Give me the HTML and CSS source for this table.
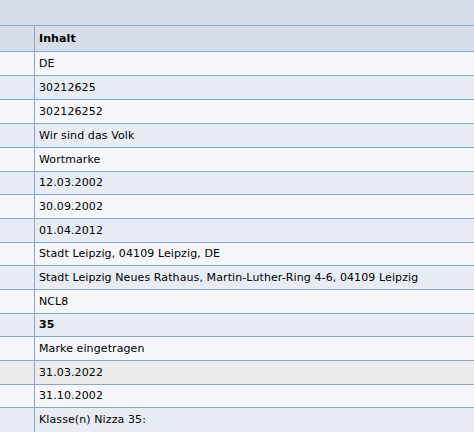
FILE: index.html
```html
<!DOCTYPE html>
<html lang="de">
<head>
  <meta charset="UTF-8" />
  <title>Registerauskunft</title>
  <link rel="stylesheet" href="styles.css">
</head>
<body>

  <div class="register">
    <div class="register-head"></div>

    <table class="register-table">
      <thead>
        <tr>
          <th class="col-label"></th>
          <th class="col-value">Inhalt</th>
        </tr>
      </thead>
      <tbody>
        <tr class="odd"><td class="col-label"></td><td>DE</td></tr>
        <tr class="even"><td class="col-label"></td><td>30212625</td></tr>
        <tr class="odd"><td class="col-label"></td><td>302126252</td></tr>
        <tr class="even"><td class="col-label"></td><td>Wir sind das Volk</td></tr>
        <tr class="odd"><td class="col-label"></td><td>Wortmarke</td></tr>
        <tr class="even tight"><td class="col-label"></td><td>12.03.2002</td></tr>
        <tr class="odd"><td class="col-label"></td><td>30.09.2002</td></tr>
        <tr class="even"><td class="col-label"></td><td>01.04.2012</td></tr>
        <tr class="odd tight"><td class="col-label"></td><td>Stadt Leipzig, 04109 Leipzig, DE</td></tr>
        <tr class="even"><td class="col-label"></td><td>Stadt Leipzig Neues Rathaus, Martin-Luther-Ring 4-6, 04109 Leipzig</td></tr>
        <tr class="odd"><td class="col-label"></td><td>NCL8</td></tr>
        <tr class="even tight"><td class="col-label"></td><td><strong>35</strong></td></tr>
        <tr class="odd"><td class="col-label"></td><td>Marke eingetragen</td></tr>
        <tr class="marked"><td class="col-label"></td><td>31.03.2022</td></tr>
        <tr class="odd tight"><td class="col-label"></td><td>31.10.2002</td></tr>
        <tr class="even multi">
          <td class="col-label"></td>
          <td>Klasse(n) Nizza 35:<br>Werbung; Geschäftsführung; Unternehmensverwaltung; Büroarbeiten</td>
        </tr>
      </tbody>
    </table>
  </div>

</body>
</html>
```

FILE: styles.css
```css
:root {
  --line: #8aa5c5;
  --head: #d6dfe9;
  --row-light: #f5f7fb;
  --row-dark: #e8edf5;
  --row-marked: #ebebeb;
  --text: #000;
}

* {
  box-sizing: border-box;
  margin: 0;
  padding: 0;
}

body {
  font-family: 'DejaVu Sans', Verdana, sans-serif;
  font-size: 11px;
  line-height: 14px;
  color: var(--text);
  background-color: #fff;
  overflow: hidden;
}

.register {
  width: 520px;
}

.register-head {
  height: 26px;
  background-color: var(--head);
  border-bottom: 1px solid var(--line);
}

.register-table {
  width: 100%;
  border-collapse: separate;
  border-spacing: 0;
}

.register-table th,
.register-table td {
  text-align: left;
  vertical-align: middle;
  padding: 4px 4px 4px;
  border-bottom: 1px solid var(--line);
  letter-spacing: 0.1px;
}

.register-table .col-label {
  width: 35px;
  border-right: 1px solid var(--line);
}

.register-table thead tr {
  height: 26px;
  background-color: var(--head);
}

.register-table th {
  font-weight: 700;
}

.register-table tbody tr {
  height: 24px;
}

.register-table tbody tr.tight {
  height: 23px;
}

.register-table tr.odd {
  background-color: var(--row-light);
}

.register-table tr.even {
  background-color: var(--row-dark);
}

.register-table tr.marked {
  background-color: var(--row-marked);
}

.register-table tr.multi td {
  vertical-align: top;
  padding-top: 3px;
  line-height: 18px;
}
```
